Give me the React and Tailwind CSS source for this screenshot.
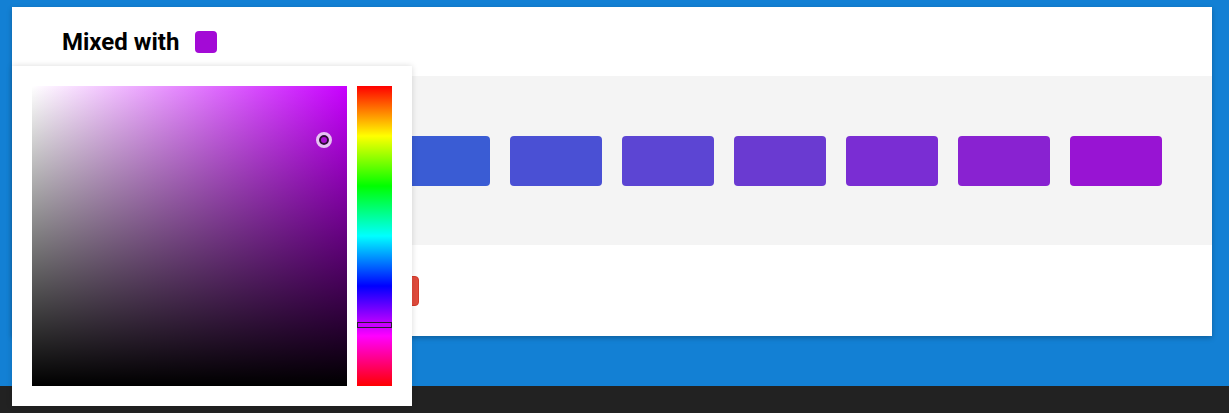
import React from 'react';

const SWATCHES = [
  'bg-[#0c80d4]',
  'bg-[#1a74d4]',
  'bg-[#2a68d4]',
  'bg-[#3a5cd4]',
  'bg-[#4a50d4]',
  'bg-[#5c45d3]',
  'bg-[#6a3ad1]',
  'bg-[#7a2dd3]',
  'bg-[#8922d1]',
  'bg-[#9814d3]',
];

function ColorPicker() {
  return (
    <div className="absolute left-0 top-[59px] w-[400px] h-[340px] bg-white p-5 flex gap-[10px] shadow-[0_0_6px_rgba(0,0,0,0.15)] z-10">
      {/* Saturation / value area */}
      <div className="relative w-[315px] h-[300px] bg-[linear-gradient(to_right,#fff,#c800ff)]">
        <div className="absolute inset-0 bg-linear-to-t from-black to-transparent" />
        <div className="absolute left-[284px] top-[46px] w-[16px] h-[16px] rounded-full border-[3px] border-[#e6c4f2] shadow-[inset_0_0_0_2px_#2a1030]" />
      </div>
      {/* Hue slider */}
      <div className="relative w-[35px] h-[300px] bg-[linear-gradient(to_bottom,#f00,#ff0,#0f0,#0ff,#00f,#f0f,#f00)]">
        <div className="absolute left-0 right-0 top-[236px] h-[6px] border border-[#2b1a33] bg-[#c800ff]" />
      </div>
    </div>
  );
}

export default function App() {
  return (
    <div className="w-[1229px] h-[413px] bg-[#1380d4] flex flex-col font-['Roboto',sans-serif] overflow-hidden">
      <div className="flex-1 pt-[7px] pl-[12px]">
        <div className="relative w-[1200px] h-[329px] bg-white shadow-[0_2px_5px_rgba(0,0,0,0.25)] flex flex-col">
          {/* Header */}
          <div className="h-[69px] pl-[50px] flex items-center gap-4">
            <span className="text-[24px] font-bold text-black">Mixed with</span>
            <div className="w-[22px] h-[22px] rounded-[4px] bg-[#a30ad6]" />
          </div>

          {/* Mixed swatches */}
          <div className="h-[169px] bg-[#f4f4f4] pl-[50px] flex items-center gap-5">
            {SWATCHES.map((cls) => (
              <div key={cls} className={`w-[92px] h-[50px] rounded-[4px] ${cls}`} />
            ))}
          </div>

          {/* Actions */}
          <div className="flex-1 pl-[50px] flex items-center">
            <button className="ml-[268px] w-[89px] h-[30px] rounded-[4px] bg-[#e04b3c] border border-[#d23a2a] text-white text-sm">
              Reset
            </button>
          </div>

          <ColorPicker />
        </div>
      </div>
      <div className="h-[27px] bg-[#222222]" />
    </div>
  );
}
